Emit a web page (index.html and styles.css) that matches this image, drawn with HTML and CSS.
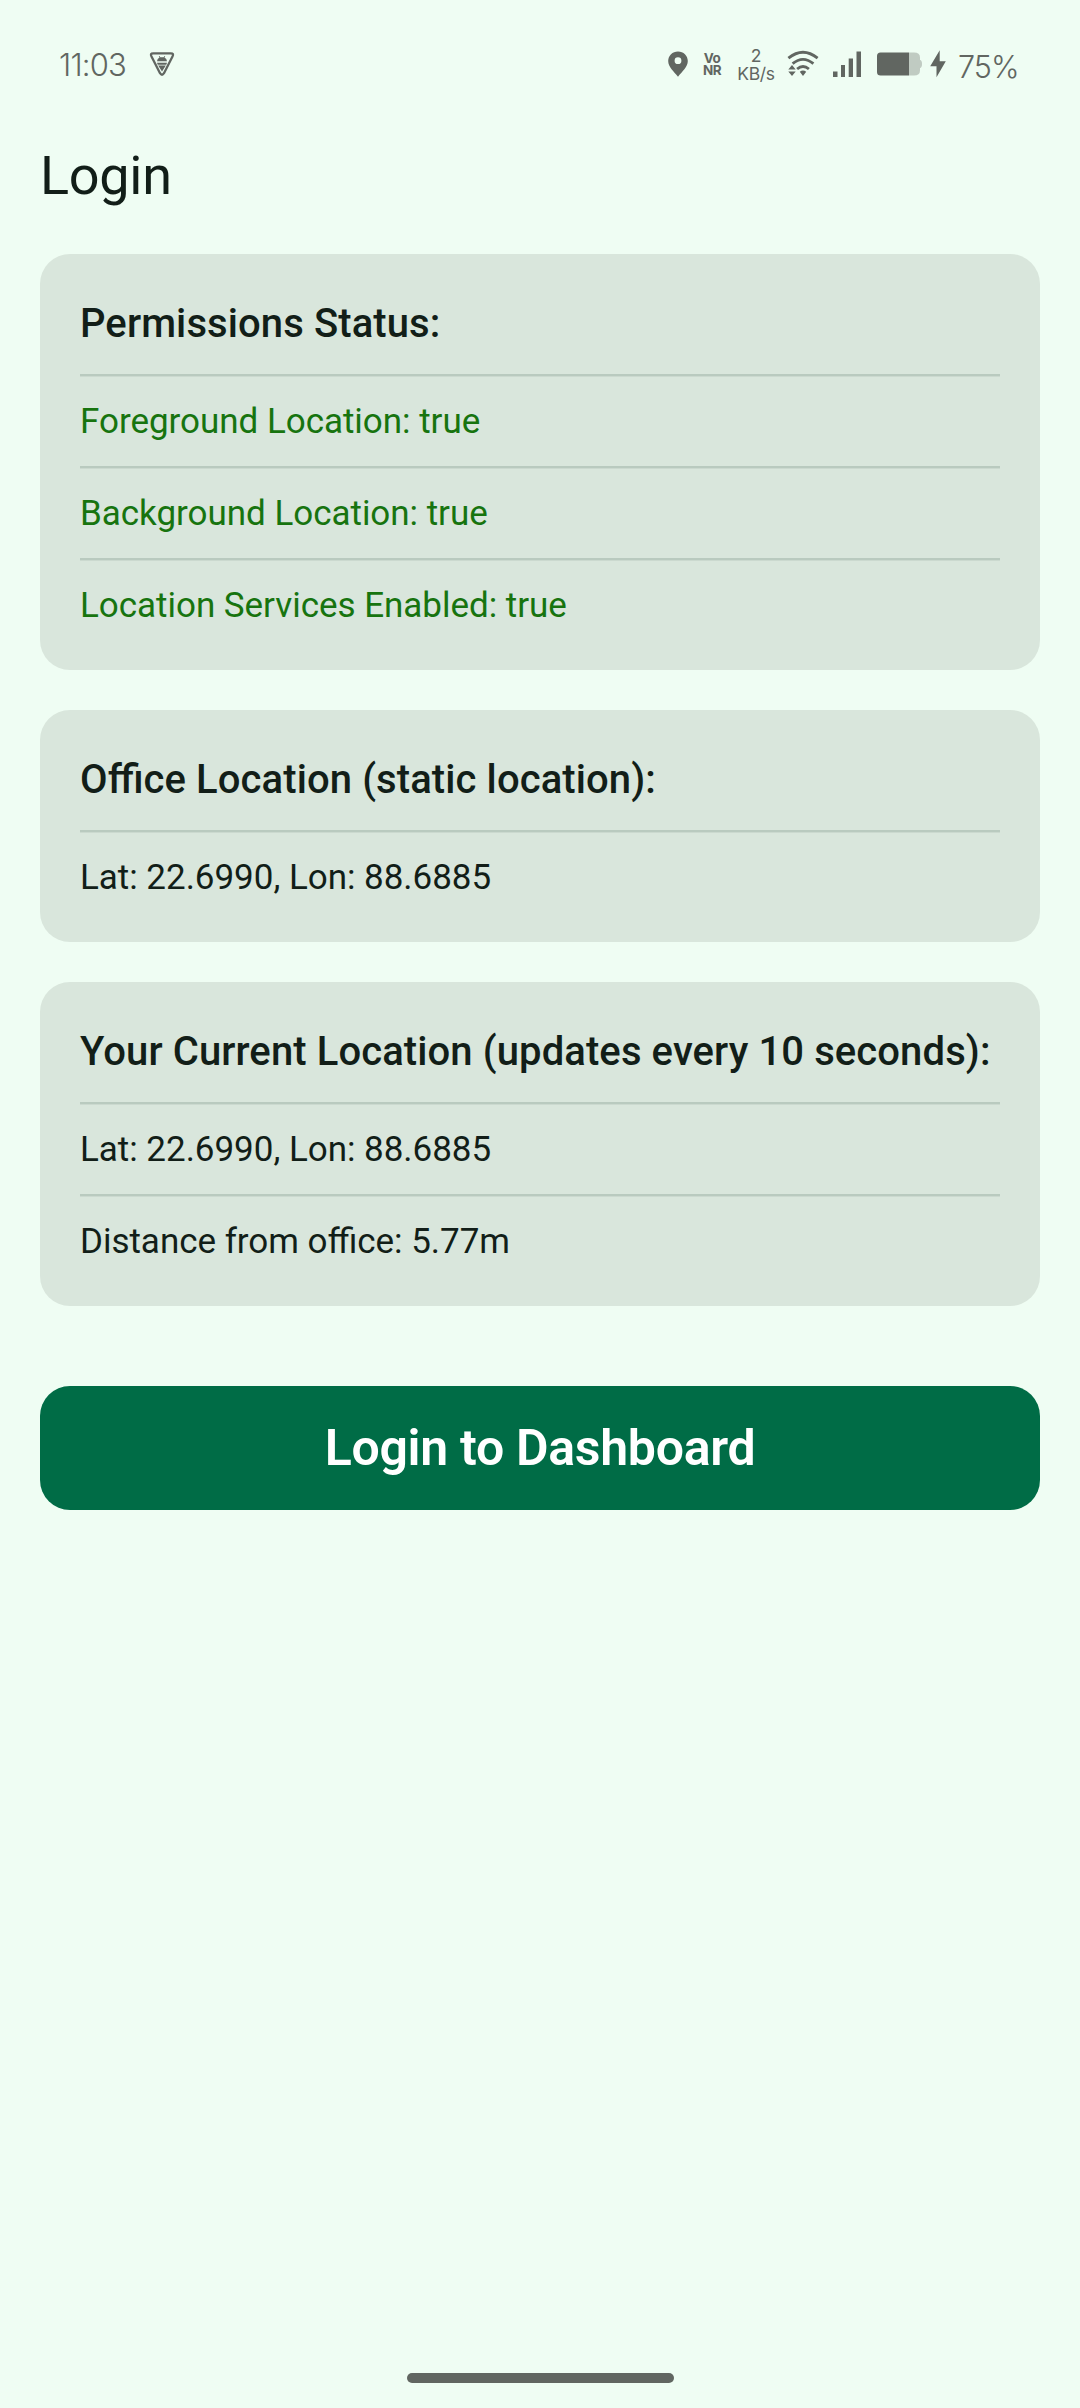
FILE: index.html
```html
<!DOCTYPE html>
<html lang="en">
<head>
<meta charset="utf-8">
<title>Login</title>
<link rel="stylesheet" href="styles.css">
</head>
<body>
<div class="screen">
  <header class="status">
    <div class="status-group">
      <span class="clock">11:03</span>
      <svg class="debug" width="28" height="28" viewBox="0 0 28 28">
        <path d="M5.2 3.3H22.8Q26.200 3.300 24.500 6.500L16 23.200Q14 26.300 12 23.200L3.500 6.500Q1.800 3.300 5.200 3.300Z" fill="none" stroke="currentColor" stroke-width="2.300"/>
        <path d="M9 11.300Q9.200 8.500 11.500 7.600L10.800 6.200L11.500 6L12.300 7.300H15.700L16.500 6L17.200 6.200L16.500 7.600Q18.800 8.500 19 11.300ZM9 12.800H19L18.300 14.700H9.700ZM10.200 15.600H17.800L14 21.600Z" fill="currentColor"/>
      </svg>
    </div>
    <div class="status-group">
      <svg width="20" height="26" viewBox="0 0 20 26"><path fill="currentColor" fill-rule="evenodd" d="M10 .4C4.500.400.200 4.600.200 10C.200 16 6 20.500 10 25.700C14 20.500 19.800 16 19.800 10C19.800 4.600 15.500.400 10 .400ZM10 6.300A3.400 3.400 0 1 1 10 13.100A3.400 3.400 0 1 1 10 6.300Z"/></svg>
      <span class="vonr"><span>Vo</span><span>NR</span></span>
      <span class="speed"><span>2</span><span>KB/s</span></span>
      <svg class="wifi" width="32" height="28" viewBox="0 0 32 28">
        <g fill="none" stroke="currentColor" stroke-width="2.800"><path d="M1.400 8.200Q16-3.800 30.600 8.200"/><path d="M5.600 13.700Q16 5.100 26.400 13.700"/><path d="M10.100 19Q16 14 21.900 19"/></g>
        <path fill="currentColor" d="M12.800 21.800Q16 19.300 19.200 21.800L16 26ZM1.300 19.600L5 15L8.700 19.600ZM1.300 21.400L5 26L8.700 21.400Z"/>
      </svg>
      <svg class="signal" width="28" height="26" viewBox="0 0 28 26"><path fill="currentColor" d="M0 20.500h4.500V26H0ZM8 14h4v12H8ZM15.700 7.500h4.300V26h-4.300ZM23.500 0.500H28V26h-4.500Z"/></svg>
      <svg class="battery" width="46" height="24" viewBox="0 0 46 24"><path fill="#c0cbc2" d="M32 .500h5q6 0 6 5V8q2 .300 2 4t-2 4v2.500q0 5-6 5h-5Z"/><path fill="currentColor" d="M32 .500H3.500Q0 .500 0 4V20Q0 23.500 3.500 23.500H32Z"/></svg>
      <svg class="bolt" width="16" height="28" viewBox="0 0 16 28"><path fill="currentColor" d="M9.700.300L.200 16.200H6.500V27.300L15.800 11.200H9.700Z"/></svg>
      <span class="percent">75%</span>
    </div>
  </header>
  <main class="content">
    <h1 class="title">Login</h1>
    <section class="card">
      <h2>Permissions Status:</h2>
      <p class="ok">Foreground Location: true</p>
      <p class="ok">Background Location: true</p>
      <p class="ok">Location Services Enabled: true</p>
    </section>
    <section class="card">
      <h2>Office Location (static location):</h2>
      <p>Lat: 22.6990, Lon: 88.6885</p>
    </section>
    <section class="card">
      <h2>Your Current Location (updates every 10 seconds):</h2>
      <p>Lat: 22.6990, Lon: 88.6885</p>
      <p>Distance from office: 5.77m</p>
    </section>
    <button class="login" type="button">Login to Dashboard</button>
  </main>
  <div class="nav-handle"></div>
</div>
</body>
</html>
```

FILE: styles.css
```css
* { box-sizing: border-box; }
body { margin: 0; background: #effdf3; color: #121e18; font-family: Roboto, sans-serif; }
.screen { width: 1080px; height: 2408px; display: flex; flex-direction: column; }
.status { height: 128px; padding: 0 61px 0 59px; display: flex; justify-content: space-between; align-items: center; color: #616661; font-family: Inter, sans-serif; }
.status-group { display: flex; align-items: center; height: 128px; }
.status svg { display: block; flex: none; }
.clock { font-size: 31px; font-weight: 350; letter-spacing: -.8px; width: 89px; white-space: nowrap; }
.vonr { display: flex; flex-direction: column; width: 20px; margin-left: 14px; font-size: 13.5px; line-height: 12px; font-weight: 700; letter-spacing: -.5px; text-align: center; }
.speed { display: flex; flex-direction: column; width: 40px; margin-left: 14px; padding-top: 1px; font-size: 17.5px; line-height: 18px; letter-spacing: -.3px; text-align: center; }
.wifi { margin-left: 11px; }
.signal { margin-left: 14px; }
.battery { margin-left: 16px; }
.bolt { margin-left: 7px; }
.percent { width: 61px; margin-left: 12px; padding-top: 4px; font-size: 30.5px; font-weight: 350; letter-spacing: -.9px; white-space: nowrap; }
.content { flex: 1; padding: 0 40px; display: flex; flex-direction: column; gap: 40px; }
.title { margin: 0; height: 86px; font-size: 54px; font-weight: 400; line-height: 96px; letter-spacing: -.3px; }
.card { background: #d9e6dc; border-radius: 30px; padding: 20px 40px; }
.card h2 { margin: 0; height: 100px; font-size: 40px; line-height: 100px; font-weight: 500; letter-spacing: .1px; font-feature-settings: "liga" 1; white-space: nowrap; }
.card p { margin: 0; height: 92px; font-size: 35px; line-height: 95px; letter-spacing: -.03px; font-feature-settings: "liga" 1; background: linear-gradient(#b9cabf 2px, #cbd9cf 2px) top / 100% 3px no-repeat; }
.card .ok { color: #17740f; }
.login { margin-top: 40px; height: 124px; border: 0; border-radius: 30px; background: #006c46; color: #fff; font: 600 50px/124px Roboto, sans-serif; letter-spacing: -.3px; padding: 0; }
.nav-handle { width: 267px; height: 10px; margin: 0 auto 25px; border-radius: 5px; background: #616661; }
```
